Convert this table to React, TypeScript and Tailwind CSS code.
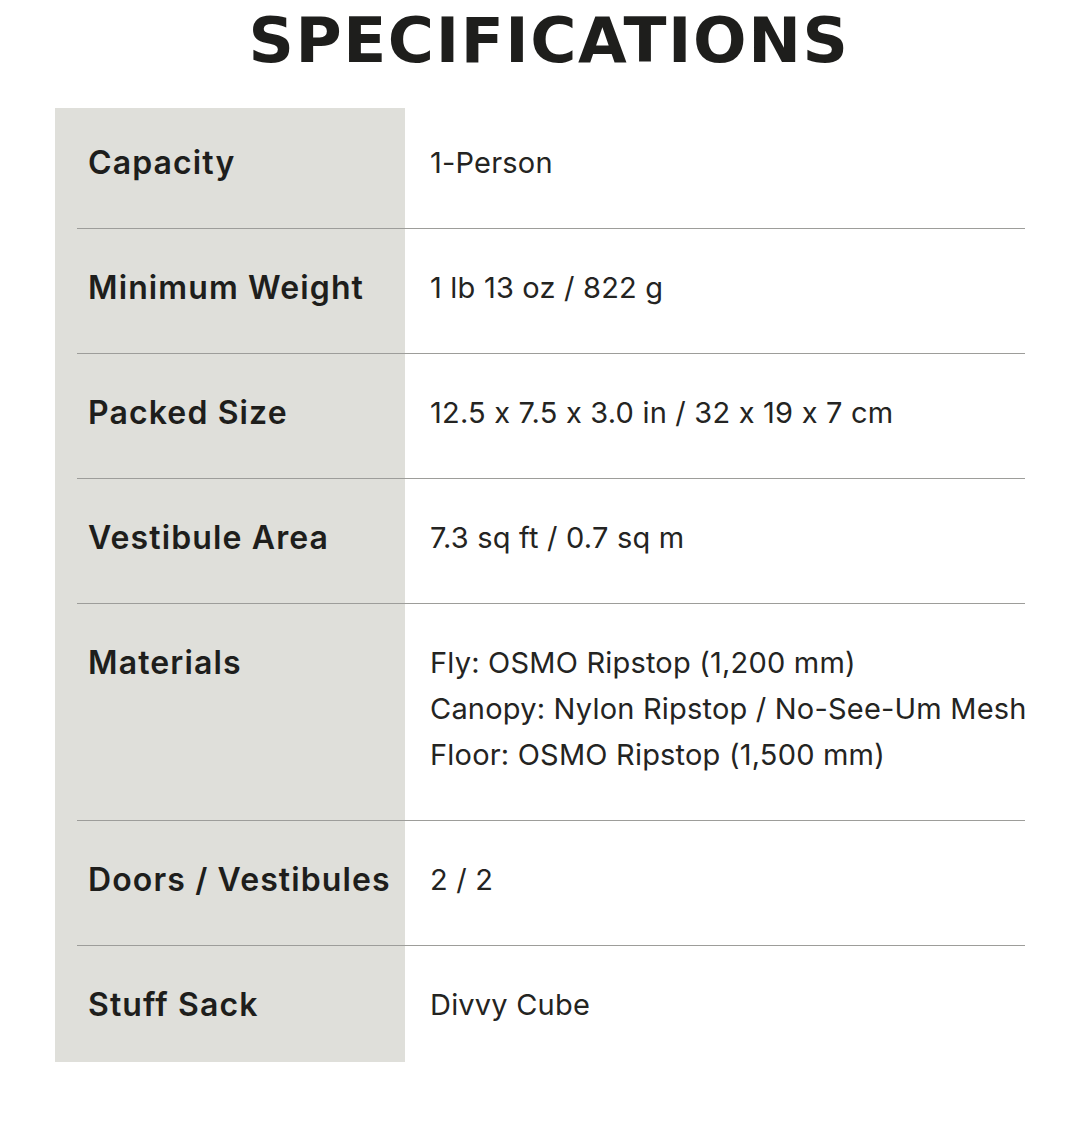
export default function App() {
  const specs: { label: string; value: string[] }[] = [
    { label: "Capacity", value: ["1-Person"] },
    { label: "Minimum Weight", value: ["1 lb 13 oz / 822 g"] },
    { label: "Packed Size", value: ["12.5 x 7.5 x 3.0 in / 32 x 19 x 7 cm"] },
    { label: "Vestibule Area", value: ["7.3 sq ft / 0.7 sq m"] },
    {
      label: "Materials",
      value: [
        "Fly: OSMO Ripstop (1,200 mm)",
        "Canopy: Nylon Ripstop / No-See-Um Mesh",
        "Floor: OSMO Ripstop (1,500 mm)",
      ],
    },
    { label: "Doors / Vestibules", value: ["2 / 2"] },
    { label: "Stuff Sack", value: ["Divvy Cube"] },
  ];

  return (
    <div className="min-h-[1126px] w-[1080px] bg-white text-[#1e1e1c]">
      <h1 className="h-[81px] pt-[1px] pl-[18px] text-center font-['DejaVu_Sans',sans-serif] text-[63px] font-bold leading-[80px] tracking-[0.025em]">
        SPECIFICATIONS
      </h1>

      <div className="mt-[27px] ml-[55px] w-[970px] bg-[linear-gradient(to_right,#dfdfda_350px,#ffffff_350px)] pl-[22px] font-['Inter',sans-serif] [font-feature-settings:'calt'_0]">
        {specs.map((row, i) => (
          <div
            key={row.label}
            className={
              "flex " +
              (i === 0
                ? "pt-[32px] pb-[42px]"
                : i === specs.length - 1
                  ? "border-t border-[#9d9d9a] pt-[36px] pb-[34px]"
                  : "border-t border-[#9d9d9a] pt-[36px] pb-[42px]")
            }
          >
            <div className="w-[328px] shrink-0 pl-[11px] text-[32px] font-semibold leading-[46px] tracking-[0.035em]">
              {row.label}
            </div>
            <div className="pl-[25px] text-[29px] leading-[46px] tracking-[0.2px] text-[#242422]">
              {row.value.map((v) => (
                <div key={v} className="whitespace-nowrap">
                  {v}
                </div>
              ))}
            </div>
          </div>
        ))}
      </div>
    </div>
  );
}
